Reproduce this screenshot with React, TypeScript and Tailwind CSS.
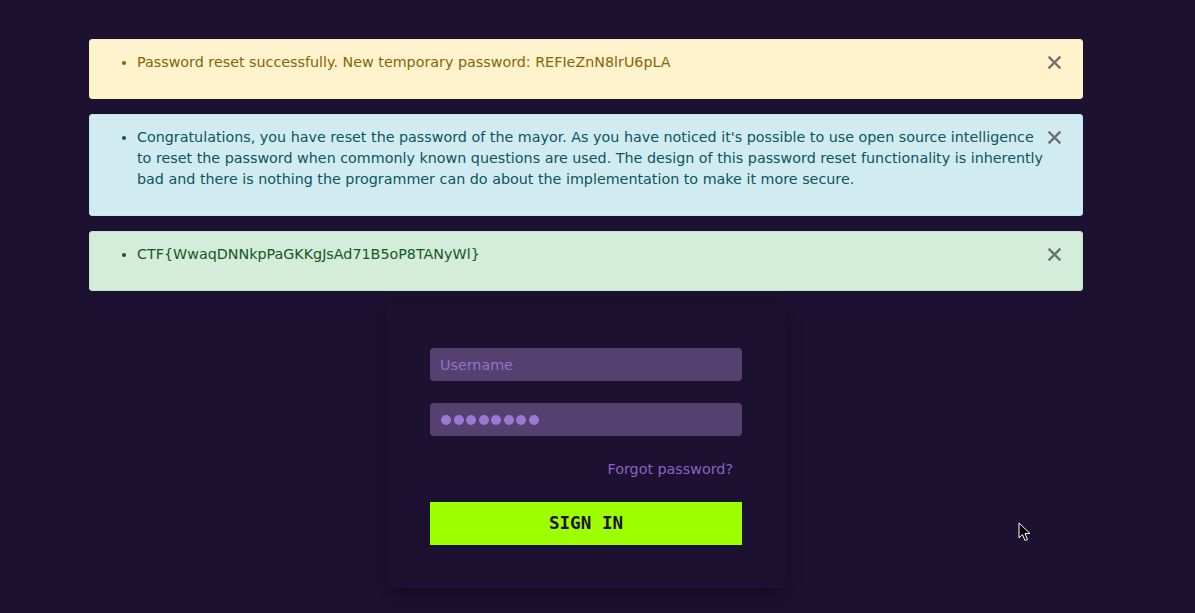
import React from "react";

function Close() {
  return (
    <button className="absolute right-[21px] top-[16px] w-[13px] h-[13px] flex items-center justify-center">
      <svg width="13" height="13" viewBox="0 0 13 13">
        <path d="M1.5 1.5 L11.5 11.5 M11.5 1.5 L1.5 11.5" stroke="#6f6f6f" strokeWidth="2.4" strokeLinecap="square" />
      </svg>
    </button>
  );
}

function Alert({ bg, border, color, children }: { bg: string; border: string; color: string; children: React.ReactNode }) {
  return (
    <div className={`relative rounded-[3px] border ${bg} ${border} ${color} pt-[12px] pb-[12px] pl-[20px] pr-[36px]`}>
      <ul className="list-disc pl-[27px] mb-[13px] text-[14.3px] leading-[21px]">
        <li>{children}</li>
      </ul>
      <Close />
    </div>
  );
}

export default function App() {
  return (
    <div className="h-[613px] overflow-hidden bg-[#1c1130] relative" style={{ fontFamily: '"DejaVu Sans", sans-serif' }}>
      <div className="ml-[89px] w-[994px] pt-[39px] flex flex-col">
        <div className="flex flex-col gap-[15px]">
          <Alert bg="bg-[#fff3cd]" border="border-[#ffeeba]" color="text-[#856404]">
            Password reset successfully. New temporary password: REFIeZnN8lrU6pLA
          </Alert>
          <Alert bg="bg-[#d1ecf1]" border="border-[#bee5eb]" color="text-[#0c5460]">
            Congratulations, you have reset the password of the mayor. As you have noticed it's possible to use open source intelligence to reset the password when commonly known questions are used. The design of this password reset functionality is inherently bad and there is nothing the programmer can do about the implementation to make it more secure.
          </Alert>
          <Alert bg="bg-[#d4edda]" border="border-[#c3e6cb]" color="text-[#155724]">
            CTF{"{"}WwaqDNNkpPaGKKgJsAd71B5oP8TANyWl{"}"}
          </Alert>
        </div>
        <div className="mt-[12px] self-center w-[398px] bg-[#1c1130] rounded-[4px] shadow-[0_6px_18px_rgba(0,0,0,0.35)] px-[43px] pt-[45px] pb-[43px] flex flex-col">
          <input
            className="h-[33px] w-full rounded-[4px] bg-[#54416f] px-[10px] text-[14.3px] text-[#9f7ad6] placeholder-[#9571cc] outline-none"
            placeholder="Username"
          />
          <div className="mt-[22px] h-[33px] w-full rounded-[4px] bg-[#54416f] pl-[11px] flex items-center gap-[2.5px]">
            {Array.from({ length: 8 }).map((_, i) => (
              <span key={i} className="block w-[10px] h-[10px] rounded-full bg-[#9c78d4]" />
            ))}
          </div>
          <div className="mt-[23px] flex justify-end pr-[9px]">
            <a className="text-[14.3px] leading-[21px] text-[#8c62c2]">Forgot password?</a>
          </div>
          <button
            className="mt-[22px] h-[43px] w-full bg-[#9dff00] text-[#1c1130] text-[17.6px] font-bold"
            style={{ fontFamily: '"DejaVu Sans Mono", monospace' }}
          >
            SIGN IN
          </button>
        </div>
      </div>
      <svg className="absolute left-[1018px] top-[522px]" width="13" height="20" viewBox="0 0 13 20">
        <path d="M1 1 L1 16 L4.5 12.5 L7 18.5 L9.5 17.5 L7 11.5 L12 11.5 Z" fill="#000" stroke="#fff" strokeWidth="1" />
      </svg>
    </div>
  );
}
